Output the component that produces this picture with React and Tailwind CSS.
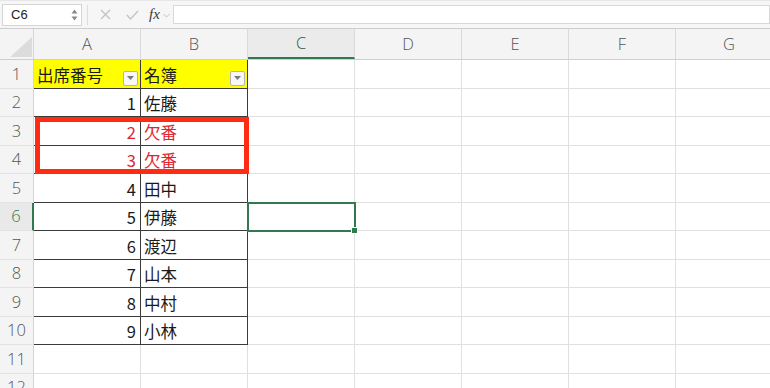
import React from 'react';

const cols = ['A', 'B', 'C', 'D', 'E', 'F', 'G'];

const rows = [
  ['出席番号', '名簿'],
  [1, '佐藤'],
  [2, '欠番'],
  [3, '欠番'],
  [4, '田中'],
  [5, '伊藤'],
  [6, '渡辺'],
  [7, '山本'],
  [8, '中村'],
  [9, '小林'],
];

const font = { fontFamily: '"Noto Sans CJK JP", "Noto Sans", sans-serif' };
const headFont = { fontFamily: '"Open Sans", "Liberation Sans", Arial, sans-serif' };

const FilterButton = () => (
  <div className="self-end mb-[2px] mr-[2px] w-[15px] h-[15px] shrink-0 rounded-[2px] border border-[#b5b5b5] bg-[#f7f7f7] flex items-center justify-center">
    <svg width="9" height="6" viewBox="0 0 9 6">
      <polygon points="1,1 8,1 4.5,5" fill="#7a7a7a" />
    </svg>
  </div>
);

const Cell = ({ rowNo, colIdx }) => {
  const inTable = rowNo <= 10 && colIdx < 2;
  const value = inTable ? rows[rowNo - 1][colIdx] : null;
  const isRed = rowNo === 3 || rowNo === 4;
  const border = inTable ? 'border-[#3b3b3b]' : 'border-[#e0e0e0]';
  const bg = rowNo === 1 && inTable ? 'bg-[#ffff00]' : 'bg-white';
  const color = isRed ? 'text-[#e0262c]' : 'text-[#1a1a1a]';

  if (rowNo === 1 && inTable) {
    return (
      <div className={`w-[107px] shrink-0 h-full border-r border-b ${border} ${bg} flex justify-between`}>
        <span className="pl-[3px] pt-[2px] text-[16.5px] leading-[26px] text-[#1a1a1a]">{value}</span>
        <FilterButton />
      </div>
    );
  }

  return (
    <div
      className={`w-[107px] shrink-0 h-full border-r border-b ${border} ${bg} flex items-center ${
        colIdx === 0 ? 'justify-end pr-[4px]' : 'justify-start pl-[3px]'
      } pt-[2px]`}
    >
      {value !== null && <span className={`text-[16.5px] leading-none ${color}`}>{value}</span>}
    </div>
  );
};

export default function App() {
  return (
    <div className="w-[770px] h-[388px] overflow-hidden bg-white" style={font}>
      {/* formula bar */}
      <div className="h-[29px] bg-[#f6f6f6] border-t border-[#e6e6e6] border-b border-b-[#cdcdcd] flex items-center">
        <div className="ml-[2px] w-[80px] h-[22px] bg-white border border-[#d4d4d4] flex items-center justify-between">
          <span className="pl-[8px] text-[13px] text-[#222]" style={{ fontFamily: '"Liberation Sans", Arial, sans-serif' }}>C6</span>
          <div className="flex flex-col items-center gap-[2px] pr-[3px]">
            <svg width="7" height="5" viewBox="0 0 7 5"><polygon points="0.5,4.5 6.5,4.5 3.5,0.5" fill="#8a8a8a" /></svg>
            <svg width="7" height="5" viewBox="0 0 7 5"><polygon points="0.5,0.5 6.5,0.5 3.5,4.5" fill="#8a8a8a" /></svg>
          </div>
        </div>
        <div className="w-px h-[20px] bg-[#dcdcdc] ml-[5px]" />
        <svg className="ml-[12px]" width="11" height="11" viewBox="0 0 11 11">
          <path d="M1 1 L10 10 M10 1 L1 10" stroke="#c4c4c4" strokeWidth="1.4" />
        </svg>
        <svg className="ml-[15px]" width="13" height="10" viewBox="0 0 13 10">
          <path d="M1 5 L4.5 9 L12 1" stroke="#c4c4c4" strokeWidth="1.4" fill="none" />
        </svg>
        <span
          className="ml-[10px] text-[15px] italic text-[#3a3a3a]"
          style={{ fontFamily: '"Liberation Serif", "Times New Roman", serif' }}
        >
          fx
        </span>
        <svg className="ml-[3px] mt-[2px]" width="7" height="5" viewBox="0 0 7 5">
          <path d="M0.5 1 L3.5 4 L6.5 1" stroke="#c0c0c0" strokeWidth="1" fill="none" />
        </svg>
        <div className="ml-[3px] flex-1 h-[19px] bg-white border border-[#d8d8d8]" />
      </div>

      {/* sheet */}
      <div className="relative">
        {/* column headers */}
        <div className="flex h-[31px] bg-[#f4f4f4] border-b border-[#cfcfcf]">
          <div className="w-[34px] shrink-0 h-full border-r border-[#d6d6d6] flex items-end justify-end">
            <svg width="26" height="24" viewBox="0 0 26 24">
              <polygon points="25,2 25,22 3,22" fill="#dcdcdc" />
            </svg>
          </div>
          {cols.map((c) => (
            <div
              key={c}
              className={`w-[107px] shrink-0 h-full border-r border-[#dadada] flex items-center justify-center pt-[1px] text-[16.5px] font-light ${
                c === 'C' ? 'bg-[#ebebeb] text-[#2f5c40] border-b-2 border-b-[#2f7a4e]' : 'text-[#555]'
              }`}
              style={headFont}
            >
              {c}
            </div>
          ))}
        </div>

        {/* rows */}
        {Array.from({ length: 12 }, (_, i) => i + 1).map((r) => (
          <div key={r} className="flex h-[28.5px]">
            <div
              className={`w-[34px] shrink-0 h-full border-b border-[#e2e2e2] flex items-center justify-center pt-[1px] text-[16.5px] font-light ${
                r === 6
                  ? 'bg-[#e9e9e9] text-[#2f7a4e] border-r-2 border-r-[#2f7a4e]'
                  : 'bg-[#f4f4f4] text-[#555] border-r border-r-[#d4d4d4]'
              }`}
              style={headFont}
            >
              {r}
            </div>
            {cols.map((c, ci) => (
              <Cell key={c} rowNo={r} colIdx={ci} />
            ))}
          </div>
        ))}

        {/* red highlight around A3:B4 */}
        <div className="absolute left-[35px] top-[88px] w-[214px] h-[57px] border-[5px] border-[#ff2b12] pointer-events-none" />

        {/* selected cell C6 */}
        <div className="absolute left-[247px] top-[173px] w-[109px] h-[30px] border-2 border-[#2f7a4e] pointer-events-none">
          <div className="absolute -right-[4px] -bottom-[4px] w-[5px] h-[5px] bg-[#2f7a4e] border border-white box-content" />
        </div>
      </div>
    </div>
  );
}
